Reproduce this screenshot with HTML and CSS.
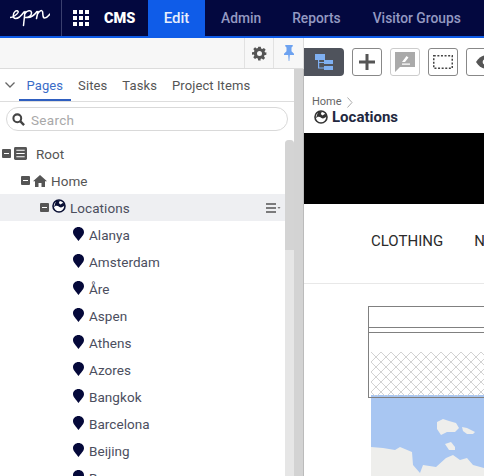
FILE: index.html
```html
<!DOCTYPE html>
<html lang="en">
<head>
<meta charset="utf-8">
<title>CMS Edit</title>
<link rel="stylesheet" href="styles.css">
</head>
<body>
<header class="topbar">
  <div class="logo-cell">
    <svg class="logo" width="40" height="20" viewBox="0 0 40 20"><path d="M0 9.500C3 9.500 7 6.500 8 4.500 8.700 2.800 6.500 2 5 3.500 2.800 5.500 2.500 10.500 5.500 10.500 8 10.500 11.500 7.500 14 4M15 3.500C14.500 8 14 13 13.500 17.500M15 5.500C17 2.500 21 1.800 21.500 4.500 22 7.500 18 10 15 9.500M17.500 9.500C21 9.500 24.500 7 27 3.500M28 3.500 26.500 10.500M27.500 6C29.500 3 31.500 1.500 32.500 3.500 33.200 5.500 32.200 10 34.500 10 36.500 10 38.500 8 40 6" fill="none" stroke="#fff" stroke-width="1.500" stroke-linecap="round"/></svg>
  </div>
  <div class="product">
    <svg class="apps" width="16" height="16" viewBox="0 0 16 16" fill="#fff"><rect x="0" y="0" width="4" height="4"/><rect x="6" y="0" width="4" height="4"/><rect x="12" y="0" width="4" height="4"/><rect x="0" y="6" width="4" height="4"/><rect x="6" y="6" width="4" height="4"/><rect x="12" y="6" width="4" height="4"/><rect x="0" y="12" width="4" height="4"/><rect x="6" y="12" width="4" height="4"/><rect x="12" y="12" width="4" height="4"/></svg>
    <span class="product-name">CMS</span>
  </div>
  <nav class="mainnav">
    <a class="nav-item nav-active">Edit</a>
    <a class="nav-item nav-admin">Admin</a>
    <a class="nav-item nav-reports">Reports</a>
    <a class="nav-item nav-visitor">Visitor Groups</a>
  </nav>
</header>
<div class="workspace">
  <aside class="left">
    <div class="pane-tools">
      <div class="tool-cell">
        <svg width="15" height="15" viewBox="0 0 24 24" fill="#555"><path fill-rule="evenodd" d="M10 1h4l.6 3.100 1.900.8 2.600-1.800 2.800 2.800-1.800 2.600.8 1.900L23 10v4l-3.100.6-.8 1.900 1.800 2.600-2.800 2.800-2.600-1.800-1.900.8L13.900 23h-4l-.6-3.100-1.900-.8-2.600 1.800-2.800-2.800 1.800-2.600-.8-1.900L0 14v-4l3.100-.6.8-1.900L2.100 4.900l2.800-2.800 2.600 1.800 1.900-.8zM12 8a4 4 0 1 0 0 8 4 4 0 0 0 0-8z"/></svg>
      </div>
      <div class="pin-cell">
        <svg width="10" height="16" viewBox="0 0 12 19" fill="#6da2f0"><path d="M1.500 0h9v1.500L9 3v4.500l3 3V12H7l-.6 7h-.8L5 12H0v-1.500l3-3V3L1.500 1.500z"/></svg>
      </div>
    </div>
    <div class="left-body">
      <div class="panel">
        <div class="tabs">
          <svg class="chev" width="10" height="6" viewBox="0 0 10 6"><path d="M.5.500 5 5 9.500.500" fill="none" stroke="#666" stroke-width="1.300"/></svg>
          <a class="tab tab-active">Pages</a>
          <a class="tab">Sites</a>
          <a class="tab">Tasks</a>
          <a class="tab">Project Items</a>
        </div>
        <div class="search">
          <svg width="13" height="13" viewBox="0 0 14 14"><circle cx="5.700" cy="5.700" r="4.200" fill="none" stroke="#444" stroke-width="2.200"/><path d="M8.800 8.800 13 13" stroke="#444" stroke-width="2.600"/></svg>
          <span class="search-text">Search</span>
        </div>
        <div class="tree-pane">
          <ul class="tree">
            <li class="row row-root">
              <span class="minus"></span>
              <svg class="root-ic" width="13" height="13" viewBox="0 0 14 14"><rect width="14" height="14" rx="1.500" fill="#555"/><path d="M2.500 3.500h9M2.500 7h9M2.500 10.500h9" stroke="#fff" stroke-width="1.300"/></svg>
              <span class="label label-root">Root</span>
            </li>
            <li class="row row-home">
              <span class="minus"></span>
              <svg class="home-ic" width="14" height="12" viewBox="0 0 14 12" fill="#555"><path d="M7 0 14 6.300H12V12H8.500V8h-3v4H2V6.300H0z"/></svg>
              <span class="label label-home">Home</span>
            </li>
            <li class="row row-loc">
              <span class="minus"></span>
              <svg class="globe" width="14" height="14" viewBox="0 0 14 14"><circle cx="7" cy="7" r="6" fill="#fff" stroke="#0a1035" stroke-width="1.600"/><path d="M1.800 8.500C3.500 6 5.500 6.500 7.500 8 9 9 11 8 12.500 6.500L11.500 3.500 8.500 5.500 6.800 4 8 1.500 4 2z" fill="#0a1035"/></svg>
              <span class="label">Locations</span>
              <svg class="row-menu" width="15" height="10" viewBox="0 0 15 10"><path d="M0 1h10M0 5h10M0 9h10" stroke="#555" stroke-width="1.600"/><path d="M11.500 4h3L13 6z" fill="#777"/></svg>
            </li>
            <li class="row row-leaf"><svg class="pin" width="11" height="14" viewBox="0 0 11 14"><path d="M5.500 0C8.500 0 11 2.200 11 5.200 11 8 7.500 11 5.500 14 3.500 11 0 8 0 5.200 0 2.200 2.500 0 5.500 0z" fill="#05093a"/></svg><span class="label">Alanya</span></li>
            <li class="row row-leaf"><svg class="pin" width="11" height="14" viewBox="0 0 11 14"><path d="M5.500 0C8.500 0 11 2.200 11 5.200 11 8 7.500 11 5.500 14 3.500 11 0 8 0 5.200 0 2.200 2.500 0 5.500 0z" fill="#05093a"/></svg><span class="label">Amsterdam</span></li>
            <li class="row row-leaf"><svg class="pin" width="11" height="14" viewBox="0 0 11 14"><path d="M5.500 0C8.500 0 11 2.200 11 5.200 11 8 7.500 11 5.500 14 3.500 11 0 8 0 5.200 0 2.200 2.500 0 5.500 0z" fill="#05093a"/></svg><span class="label">Åre</span></li>
            <li class="row row-leaf"><svg class="pin" width="11" height="14" viewBox="0 0 11 14"><path d="M5.500 0C8.500 0 11 2.200 11 5.200 11 8 7.500 11 5.500 14 3.500 11 0 8 0 5.200 0 2.200 2.500 0 5.500 0z" fill="#05093a"/></svg><span class="label">Aspen</span></li>
            <li class="row row-leaf"><svg class="pin" width="11" height="14" viewBox="0 0 11 14"><path d="M5.500 0C8.500 0 11 2.200 11 5.200 11 8 7.500 11 5.500 14 3.500 11 0 8 0 5.200 0 2.200 2.500 0 5.500 0z" fill="#05093a"/></svg><span class="label">Athens</span></li>
            <li class="row row-leaf"><svg class="pin" width="11" height="14" viewBox="0 0 11 14"><path d="M5.500 0C8.500 0 11 2.200 11 5.200 11 8 7.500 11 5.500 14 3.500 11 0 8 0 5.200 0 2.200 2.500 0 5.500 0z" fill="#05093a"/></svg><span class="label">Azores</span></li>
            <li class="row row-leaf"><svg class="pin" width="11" height="14" viewBox="0 0 11 14"><path d="M5.500 0C8.500 0 11 2.200 11 5.200 11 8 7.500 11 5.500 14 3.500 11 0 8 0 5.200 0 2.200 2.500 0 5.500 0z" fill="#05093a"/></svg><span class="label">Bangkok</span></li>
            <li class="row row-leaf"><svg class="pin" width="11" height="14" viewBox="0 0 11 14"><path d="M5.500 0C8.500 0 11 2.200 11 5.200 11 8 7.500 11 5.500 14 3.500 11 0 8 0 5.200 0 2.200 2.500 0 5.500 0z" fill="#05093a"/></svg><span class="label">Barcelona</span></li>
            <li class="row row-leaf"><svg class="pin" width="11" height="14" viewBox="0 0 11 14"><path d="M5.500 0C8.500 0 11 2.200 11 5.200 11 8 7.500 11 5.500 14 3.500 11 0 8 0 5.200 0 2.200 2.500 0 5.500 0z" fill="#05093a"/></svg><span class="label">Beijing</span></li>
            <li class="row row-leaf"><svg class="pin" width="11" height="14" viewBox="0 0 11 14"><path d="M5.500 0C8.500 0 11 2.200 11 5.200 11 8 7.500 11 5.500 14 3.500 11 0 8 0 5.200 0 2.200 2.500 0 5.500 0z" fill="#05093a"/></svg><span class="label">Bern</span></li>
          </ul>
          <div class="scrolltrack"><div class="scrollthumb"></div></div>
        </div>
      </div>
      <div class="splitter"></div>
    </div>
  </aside>
  <main class="right">
    <div class="toolbar">
      <button class="tb tb-tree">
        <svg width="18" height="16" viewBox="0 0 18 16" fill="#7fb0f2"><rect x="0" y="0" width="10" height="6"/><rect x="9" y="6" width="9" height="4"/><rect x="9" y="12" width="9" height="4"/><path d="M3 6h1.200v2H9v1H4.200v4.500H9v1H3z"/></svg>
      </button>
      <button class="tb">
        <svg width="16" height="16" viewBox="0 0 16 16"><path d="M6.500 0h3v6.500H16v3H9.500V16h-3V9.500H0v-3h6.500z" fill="#555"/></svg>
      </button>
      <button class="tb tb-faded">
        <svg width="20" height="20" viewBox="0 0 20 20"><path d="M0 0h20v15H5l-5 5z" fill="#aaa"/><path d="M7 10 11.500 4l2 1.500L10 10zM7 11.500h8v1.200H7z" fill="#fff"/></svg>
      </button>
      <button class="tb">
        <svg width="20" height="14" viewBox="0 0 20 14"><rect x=".75" y=".75" width="18.500" height="12.500" fill="none" stroke="#444" stroke-width="1.500" stroke-dasharray="2 1.600"/></svg>
      </button>
      <button class="tb tb-eye">
        <svg width="20" height="14" viewBox="0 0 20 14"><path d="M0 7C3 2 7 0 10 0s7 2 10 7c-3 5-7 7-10 7S3 12 0 7z" fill="#555"/><circle cx="10" cy="7" r="3" fill="#fff"/></svg>
      </button>
    </div>
    <div class="crumb">
      <div class="crumb-path"><span>Home</span><svg width="6" height="11" viewBox="0 0 6 11"><path d="M.5.500 5 5.500 .5 10.500" fill="none" stroke="#aaa"/></svg></div>
      <div class="crumb-title">
        <svg width="14" height="14" viewBox="0 0 14 14"><circle cx="7" cy="7" r="6" fill="#fff" stroke="#333" stroke-width="1.600"/><path d="M1.800 8.500C3.500 6 5.500 6.500 7.500 8 9 9 11 8 12.500 6.500L11.500 3.500 8.500 5.500 6.800 4 8 1.500 4 2z" fill="#333"/></svg>
        <span>Locations</span>
      </div>
    </div>
    <div class="hero"></div>
    <div class="sitenav">
      <span class="sitenav-item">CLOTHING</span>
      <span class="sitenav-item">N</span>
    </div>
    <div class="content">
      <div class="block">
        <div class="block-top"></div>
        <div class="block-mid"></div>
        <div class="block-hatch">
          <svg class="hatch" width="113" height="44">
            <defs><pattern id="diamonds" width="10" height="10" patternUnits="userSpaceOnUse"><path d="M0 0 10 10M10 0 0 10" stroke="#d2d2d2" stroke-width="1" fill="none"/></pattern></defs>
            <rect width="113" height="44" fill="url(#diamonds)"/>
          </svg>
        </div>
      </div>
      <div class="map">
        <svg width="113" height="81" viewBox="0 0 113 81">
          <path d="M0 52 12 53 24 55 29 52 41 57 42 70 49 78 52 70 65 72 75 63 82 60 89 65 96 63 102 70 113 73V81H0z" fill="#eeeeec"/>
          <path d="M66 27 72 24 78 26 85 28 88 33 84 37 76 37 70 40 66 34z" fill="#eeeeec"/>
          <path d="M91 32 96 33 104 37 102 39 96 39 92 36z" fill="#eeeeec"/>
          <path d="M74 49 80 47 84 52 84 55 78 55z" fill="#eeeeec"/>
        </svg>
      </div>
    </div>
  </main>
</div>
</body>
</html>
```

FILE: styles.css
```css
* { box-sizing: border-box; }
html, body { margin: 0; padding: 0; }
body {
  width: 484px;
  height: 476px;
  overflow: hidden;
  background: #fff;
  font-family: Roboto, "Liberation Sans", sans-serif;
  color: #333;
}
.topbar {
  display: flex;
  height: 38px;
  background: #03083f;
  border-bottom: 2px solid #0f5ce8;
  color: #fff;
}
.logo-cell {
  width: 62px;
  flex: none;
  display: flex;
  align-items: center;
  padding-left: 10px;
  border-right: 1px solid #3a3f6e;
}
.product {
  width: 86px;
  flex: none;
  display: flex;
  align-items: center;
  padding-left: 11px;
}
.product-name {
  margin-left: 15px;
  font-size: 14.5px;
  font-weight: 900;
}
.apps { flex: none; }
.mainnav { display: flex; flex: 1; }
.nav-item {
  display: flex;
  align-items: center;
  font-size: 13.8px;
  font-weight: 500;
  color: #9499c2;
  white-space: nowrap;
}
.nav-active {
  width: 57px;
  justify-content: center;
  background: #0f5ce8;
  color: #e8eefc;
  font-size: 15px;
}
.nav-admin { margin-left: 16px; }
.nav-reports { margin-left: 31px; }
.nav-visitor { margin-left: 32px; }
.workspace { display: flex; height: 438px; }
.left {
  width: 304px;
  flex: none;
  display: flex;
  flex-direction: column;
  overflow: hidden;
}
.pane-tools {
  height: 31px;
  flex: none;
  display: flex;
  justify-content: flex-end;
  background: #f7f7f7;
  border-bottom: 1px solid #dcdcdc;
  border-right: 1px solid #dcdcdc;
}
.tool-cell {
  width: 30px;
  display: flex;
  align-items: center;
  justify-content: center;
  border-left: 1px solid #e2e2e2;
  border-right: 1px solid #e2e2e2;
}
.pin-cell {
  width: 29px;
  display: flex;
  align-items: center;
  justify-content: center;
}
.left-body { flex: 1; display: flex; min-height: 0; }
.panel {
  width: 294px;
  flex: none;
  display: flex;
  flex-direction: column;
  overflow: hidden;
}
.tabs {
  height: 33px;
  flex: none;
  display: flex;
  align-items: stretch;
  padding-left: 5px;
  border-bottom: 1px solid #ddd;
  font-size: 13px;
}
.chev { align-self: center; margin-right: 4px; flex: none; }
.tab {
  display: flex;
  align-items: center;
  padding: 0 7.500px;
  color: #555;
  letter-spacing: .1px;
  white-space: nowrap;
}
.tab-active {
  color: #3a6cc8;
  box-shadow: inset 0 -2px 0 #2f5fc0;
}
.search {
  display: flex;
  align-items: center;
  gap: 6px;
  height: 24px;
  flex: none;
  margin: 5px 6px 0 6px;
  padding: 1px 0 0 5px;
  border: 1px solid #d9d9d9;
  border-radius: 13px;
  background: #fff;
}
.search-text { font-size: 13.5px; color: #a8a8a8; letter-spacing: .3px; }
.tree-pane { flex: 1; display: flex; min-height: 0; margin-top: 9px; }
.tree { flex: 1; min-width: 0; list-style: none; margin: 0; padding: 0; overflow: hidden; }
.row {
  display: flex;
  align-items: center;
  height: 27px;
  font-size: 13.5px;
  color: #4b4e5e;
}
.row-root { padding-left: 2px; }
.row-home { padding-left: 21px; }
.row-loc { padding-left: 40px; background: #eeeff2; }
.row-leaf { padding-left: 73px; }
.minus {
  position: relative;
  width: 9px;
  height: 9px;
  flex: none;
  margin-right: 3px;
  border-radius: 1px;
  background: #555;
}
.minus::after {
  content: "";
  position: absolute;
  left: 2px;
  top: 4px;
  width: 5px;
  height: 1px;
  background: #fff;
}
.root-ic { margin-right: 9px; flex: none; }
.home-ic { margin-right: 4px; flex: none; }
.globe { margin-right: 4px; flex: none; margin-top: -3px; }
.label { letter-spacing: .05px; }
.label-root, .label-home { color: #555; }
.row-menu { margin-left: auto; margin-right: 4px; flex: none; }
.pin { margin-right: 5px; margin-top: -1px; flex: none; }
.scrolltrack {
  width: 9px;
  flex: none;
  background: #e6e6e6;
  border-radius: 4px 4px 0 0;
}
.scrollthumb {
  height: 110px;
  background: #d4d4d4;
  border-radius: 4px 4px 0 0;
}
.splitter {
  width: 10px;
  flex: none;
  background: #d3d3d3;
  border-right: 1px solid #bbb;
}
.right { flex: 1; min-width: 0; overflow: hidden; display: flex; flex-direction: column; }
.toolbar {
  height: 38px;
  flex: none;
  display: flex;
  align-items: flex-start;
  gap: 8px;
  padding-top: 10px;
  overflow: hidden;
}
.tb {
  width: 30px;
  height: 28px;
  flex: none;
  display: flex;
  align-items: center;
  justify-content: center;
  padding: 0;
  background: #fff;
  border: 1px solid #888;
  border-radius: 3px;
}
.tb-tree { width: 40px; background: #4f535c; border: 0; border-radius: 0 4px 4px 0; }
.tb-faded { border-color: #ccc; }
.tb-eye { justify-content: flex-start; padding-left: 9px; }
.crumb { height: 57px; padding: 20px 0 0 8px; flex: none; }
.crumb-path { display: flex; align-items: center; gap: 5px; font-size: 11px; line-height: 12px; color: #666; }
.crumb-title { display: flex; align-items: center; gap: 4px; margin-top: 1px; margin-left: 2px; font-size: 15px; line-height: 16px; font-weight: 700; color: #222840; }
.hero { height: 71px; flex: none; background: #000; }
.sitenav {
  height: 80px;
  flex: none;
  display: flex;
  align-items: center;
  gap: 31px;
  padding: 0 0 6px 67px;
  border-bottom: 1px solid #e8e8e8;
  font-size: 15px;
  color: #2b2b2b;
  white-space: nowrap;
}
.content { flex: 1; padding: 22px 0 0 64px; }
.block {
  position: relative;
  width: 116px;
  height: 92px;
  border: 1px solid #808080;
  border-right: 0;
}
.block-top { height: 21px; border-bottom: 1px solid #808080; }
.block-mid { height: 5px; border-bottom: 1px solid #808080; }
.block-hatch { height: 63px; padding: 19px 0 0 2px; line-height: 0; }
.map { margin: -3px 0 0 3px; height: 81px; background: #a8c6f2; line-height: 0; }
```
